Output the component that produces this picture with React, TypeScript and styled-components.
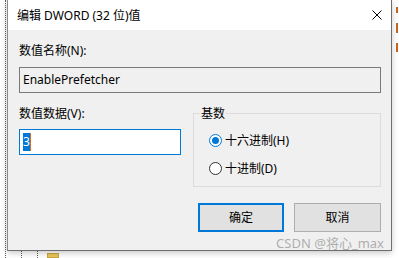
import React from "react";
import styled, { createGlobalStyle } from "styled-components";

const Global = createGlobalStyle`
  html, body { margin: 0; padding: 0; background: #ffffff; }
  body { font-family: "Noto Sans", "Noto Sans CJK SC", sans-serif; font-size: 12px; color: #000; }
  * { box-sizing: border-box; }
`;

const Page = styled.div`
  width: 399px;
  height: 258px;
  display: flex;
  overflow: hidden;
  background: #ffffff;
`;

const Gutter = styled.div`
  width: 7px;
  flex: none;
  padding-left: 5px;
  display: flex;
`;

const DottedLine = styled.div<{ $h?: number }>`
  width: 1px;
  height: ${(p) => (p.$h ? `${p.$h}px` : "100%")};
  border-left: 1px dotted #5a5a5a;
`;

const Column = styled.div`
  width: 385px;
  flex: none;
  display: flex;
  flex-direction: column;
`;

const Dialog = styled.div`
  width: 385px;
  height: 251px;
  flex: none;
  border-left: 1px solid #8a8a8a;
  border-right: 1px solid #6e6e6e;
  border-bottom: 1px solid #6e6e6e;
  box-shadow: 0 2px 6px rgba(0, 0, 0, 0.22);
  display: flex;
  flex-direction: column;
  background: #f0f0f0;
  position: relative;
  z-index: 1;
`;

const TitleBar = styled.div`
  height: 30px;
  background: #ffffff;
  display: flex;
  align-items: center;
  padding-left: 9px;
  padding-right: 9px;
`;

const Title = styled.div`
  flex: 1;
  font-size: 12px;
  line-height: 16px;
  padding-top: 1px;
`;

const CloseBtn = styled.div`
  width: 10px;
  height: 10px;
  display: flex;
`;

const Body = styled.div`
  flex: 1;
  padding: 13px 10px 0 11px;
  display: flex;
  flex-direction: column;
`;

const Label = styled.div`
  line-height: 16px;
  height: 16px;
`;

const Input = styled.div<{ $active?: boolean }>`
  height: 26px;
  border: 1px solid ${(p) => (p.$active ? "#0078d7" : "#7a7a7a")};
  background: ${(p) => (p.$active ? "#ffffff" : "#f0f0f0")};
  display: flex;
  align-items: center;
  padding-left: 3px;
  line-height: 16px;
`;

const NameInput = styled(Input)`
  margin-top: 8px;
`;

const Selected = styled.span`
  background: #0078d7;
  color: #ffffff;
  display: inline-block;
  height: 18px;
  line-height: 18px;
  font-size: 12px;
`;

const Caret = styled.span`
  display: inline-block;
  width: 1px;
  height: 18px;
  background: #e06a1b;
`;

const Row = styled.div`
  display: flex;
  align-items: flex-start;
  gap: 12px;
`;

const LeftCol = styled.div`
  width: 162px;
  padding-top: 13px;
  display: flex;
  flex-direction: column;
  gap: 7px;
`;

const Group = styled.fieldset`
  margin: 13px 0 0 0;
  padding: 0;
  width: 188px;
  height: 81px;
  border: 1px solid #dcdcdc;
  min-width: 0;
`;

const Legend = styled.legend`
  padding: 0 1px;
  margin-left: 6px;
  line-height: 15px;
  font-size: 12px;
`;

const RadioList = styled.div`
  padding: 11px 0 0 15px;
  display: flex;
  flex-direction: column;
  gap: 11px;
`;

const RadioRow = styled.label`
  display: flex;
  align-items: center;
  gap: 3px;
  height: 17px;
  line-height: 16px;
`;

const RadioCircle = styled.span<{ $checked?: boolean }>`
  width: 13px;
  height: 13px;
  border-radius: 50%;
  border: 1px solid ${(p) => (p.$checked ? "#0078d7" : "#333333")};
  background: #ffffff;
  display: flex;
  align-items: center;
  justify-content: center;
  flex: none;
  &::after {
    content: "";
    width: 7px;
    height: 7px;
    border-radius: 50%;
    background: ${(p) => (p.$checked ? "#0078d7" : "transparent")};
  }
`;

const Buttons = styled.div`
  display: flex;
  justify-content: flex-end;
  gap: 10px;
  margin-top: 16px;
`;

const Button = styled.div<{ $primary?: boolean; $w: number }>`
  width: ${(p) => p.$w}px;
  height: 29px;
  background: #e1e1e1;
  border: ${(p) => (p.$primary ? "2px solid #0078d7" : "1px solid #adadad")};
  display: flex;
  align-items: center;
  justify-content: center;
  line-height: 16px;
`;

const Watermark = styled.div`
  margin-top: 4px;
  margin-right: -3px;
  text-align: right;
  font-size: 13px;
  line-height: 14px;
  color: rgba(150, 150, 150, 0.75);
`;

const BottomStrip = styled.div`
  height: 7px;
  display: flex;
  padding-left: 14px;
  gap: 15px;
  align-items: flex-start;
`;

const Folder = styled.div`
  width: 12px;
  height: 5px;
  margin-left: -6px;
  margin-top: 2px;
  background: #e8c65a;
  border: 1px solid #c9a53c;
`;

const RightStrip = styled.div`
  width: 7px;
  flex: none;
  padding-left: 4px;
  padding-top: 7px;
  display: flex;
  flex-direction: column;
  gap: 10px;
`;

const Mark = styled.div<{ $h: number }>`
  width: 2px;
  height: ${(p) => p.$h}px;
  background: #c8661e;
`;

export default function App() {
  return (
    <>
      <Global />
      <Page>
        <Gutter>
          <DottedLine />
        </Gutter>
        <Column>
          <Dialog>
            <TitleBar>
              <Title>编辑 DWORD (32 位)值</Title>
              <CloseBtn>
                <svg width="10" height="10" viewBox="0 0 10 10">
                  <path d="M0.5 0.5 L9.5 9.5 M9.5 0.5 L0.5 9.5" stroke="#000" strokeWidth="1" />
                </svg>
              </CloseBtn>
            </TitleBar>
            <Body>
              <Label>数值名称(N):</Label>
              <NameInput>EnablePrefetcher</NameInput>
              <Row>
                <LeftCol>
                  <Label>数值数据(V):</Label>
                  <Input $active>
                    <Selected>3</Selected>
                    <Caret />
                  </Input>
                </LeftCol>
                <Group>
                  <Legend>基数</Legend>
                  <RadioList>
                    <RadioRow>
                      <RadioCircle $checked />
                      十六进制(H)
                    </RadioRow>
                    <RadioRow>
                      <RadioCircle />
                      十进制(D)
                    </RadioRow>
                  </RadioList>
                </Group>
              </Row>
              <Buttons>
                <Button $primary $w={86}>确定</Button>
                <Button $w={87}>取消</Button>
              </Buttons>
              <Watermark>CSDN @将心_max</Watermark>
            </Body>
          </Dialog>
          <BottomStrip>
            <DottedLine $h={7} />
            <DottedLine $h={7} />
            <Folder />
          </BottomStrip>
        </Column>
        <RightStrip>
          <Mark $h={6} />
          <Mark $h={10} />
          <Mark $h={9} />
        </RightStrip>
      </Page>
    </>
  );
}
